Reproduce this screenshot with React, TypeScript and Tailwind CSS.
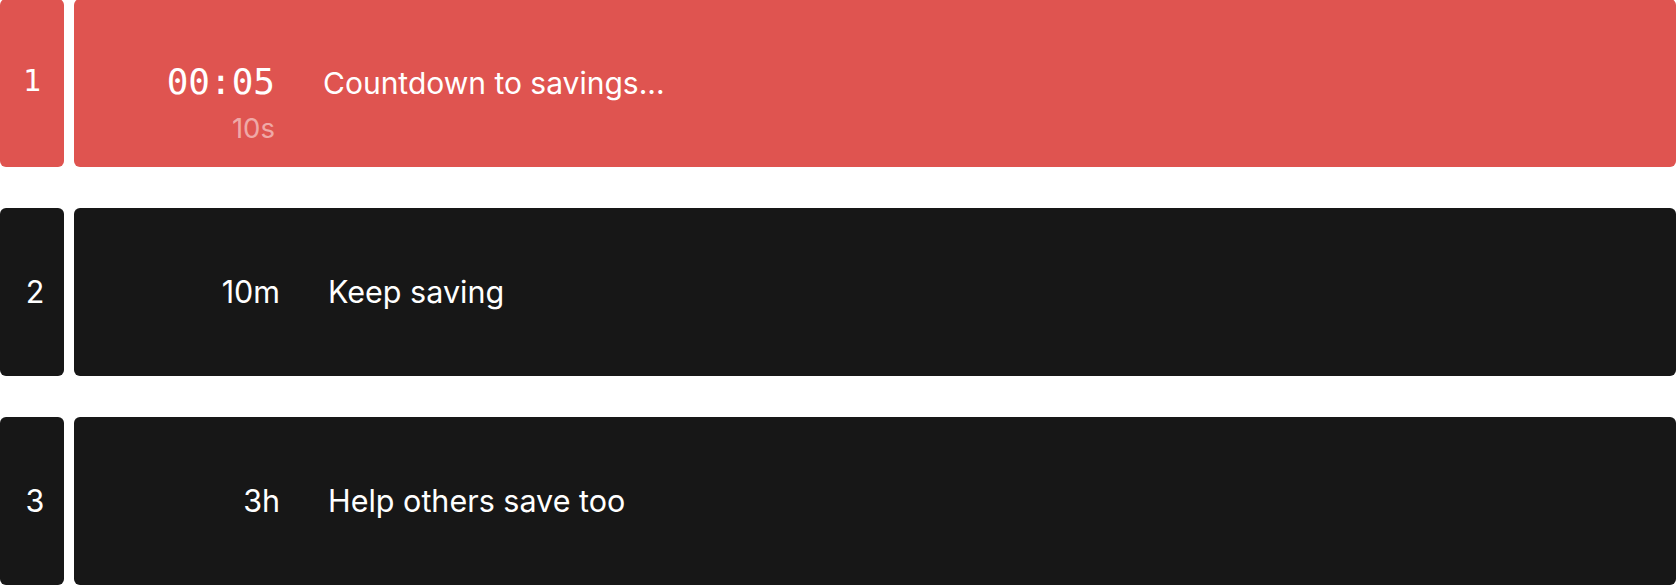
const rows = [
  { n: "2", time: "10m", label: "Keep saving" },
  { n: "3", time: "3h", label: "Help others save too" },
];

const sans = "font-['Inter',_'Noto_Sans',_sans-serif]";

const App = () => {
  return (
    <div className={`w-full h-[586px] overflow-hidden bg-white ${sans}`}>
      <div className="flex flex-col gap-[41px] -mt-px">
        {/* active row */}
        <div className="flex h-[168px] gap-2.5">
          <div className="w-16 shrink-0 rounded-md bg-[#df5450] pt-16 text-center text-[30px] leading-9 text-white font-['DejaVu_Sans_Mono',_monospace]">
            1
          </div>
          <div className="flex flex-1 items-start rounded-md bg-[#df5450] pt-[63px] text-white">
            <div className="flex w-[201px] shrink-0 flex-col items-end">
              <span className="text-4xl leading-10 font-['DejaVu_Sans_Mono',_monospace]">
                00:05
              </span>
              <span className="mt-2.5 text-[27.5px] leading-8 text-white/50">10s</span>
            </div>
            <span className="ml-12 mt-[3px] text-3xl leading-9">Countdown to savings...</span>
          </div>
        </div>

        {rows.map((r) => (
          <div key={r.n} className="flex h-[168px] gap-2.5">
            <div className="flex w-16 shrink-0 items-center justify-center rounded-md bg-[#171717] pl-1.5 text-[30.5px] text-white">
              {r.n}
            </div>
            <div className="flex flex-1 items-center rounded-md bg-[#171717] text-white">
              <span className="w-[206px] shrink-0 text-right text-[30.5px]">{r.time}</span>
              <span className="ml-12 text-[30.5px]">{r.label}</span>
            </div>
          </div>
        ))}
      </div>
    </div>
  );
};

export default App;
